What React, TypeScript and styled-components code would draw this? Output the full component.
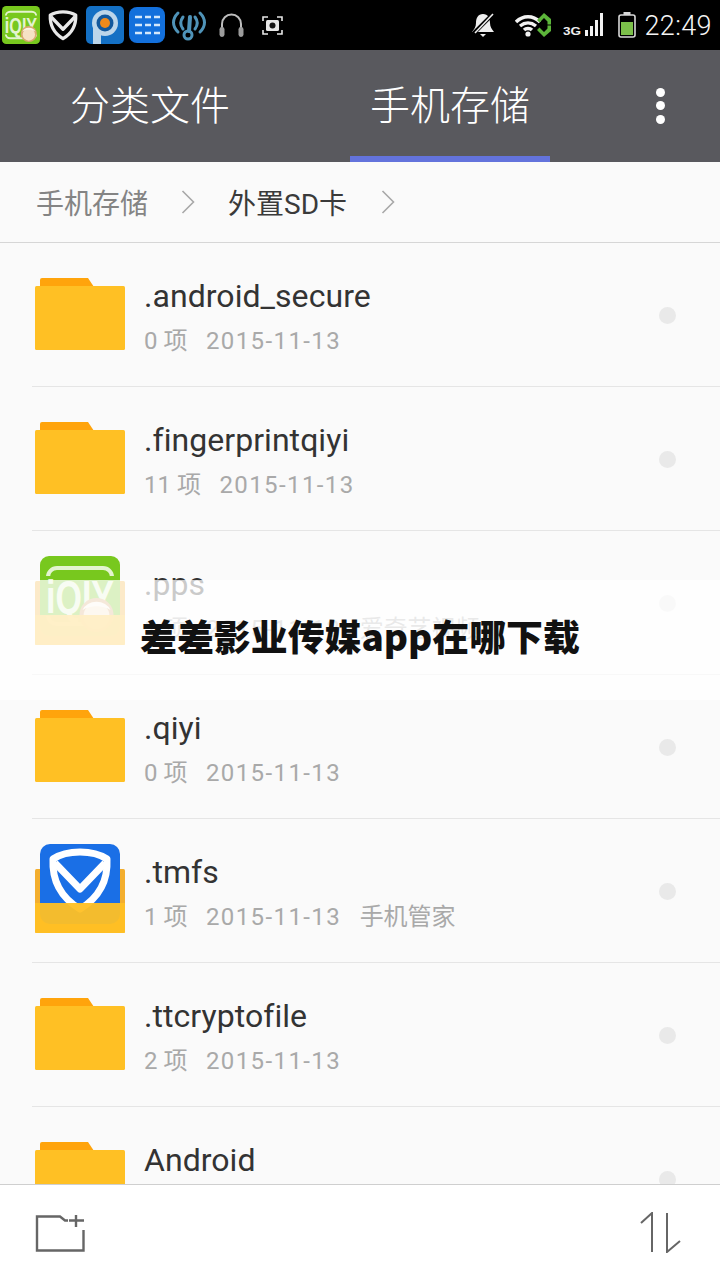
import React from "react";
import styled, { createGlobalStyle } from "styled-components";

const FONT = `Roboto, "Noto Sans CJK SC", "Noto Sans", sans-serif`;

const Global = createGlobalStyle`
  html, body { margin: 0; padding: 0; background: #fafafa; }
  * { box-sizing: border-box; }
`;

const Page = styled.div`
  position: relative;
  width: 720px;
  height: 1280px;
  display: flex;
  flex-direction: column;
  overflow: hidden;
  background: #fafafa;
  font-family: ${FONT};
`;

const StatusBar = styled.div`
  height: 50px;
  flex: none;
  background: #000;
  display: flex;
  align-items: center;
  justify-content: space-between;
  padding: 0 8px 0 2px;
`;

const StatusGroup = styled.div`
  display: flex;
  align-items: center;
`;

const Glyph = styled.svg<{ $ml?: number }>`
  display: block;
  flex: none;
  margin-left: ${(p) => p.$ml ?? 0}px;
`;

const Clock = styled.span`
  margin-left: 8px;
  padding-top: 2px;
  color: #f4f4f4;
  font-size: 27px;
  font-weight: 300;
  letter-spacing: 0.4px;
`;

const TabBar = styled.div`
  height: 112px;
  flex: none;
  background: #59595e;
  display: flex;
  padding-left: 50px;
`;

const Tab = styled.div<{ $active?: boolean }>`
  width: 200px;
  height: 112px;
  margin-right: ${(p) => (p.$active ? 0 : 100)}px;
  display: flex;
  align-items: center;
  justify-content: center;
  color: #fff;
  font-size: 40px;
  font-weight: 300;
  border-bottom: 6px solid ${(p) => (p.$active ? "#6373dc" : "transparent")};
`;

const MoreDots = styled.div`
  margin-left: 100px;
  width: 20px;
  height: 112px;
  display: flex;
  flex-direction: column;
  align-items: center;
  gap: 4.5px;
  padding-top: 37.5px;
`;

const Dot = styled.span`
  width: 9px;
  height: 9px;
  border-radius: 50%;
  background: #fff;
`;

const Breadcrumb = styled.div`
  height: 81px;
  flex: none;
  display: flex;
  align-items: center;
  padding: 0 0 0 36px;
  background: #fafafa;
  border-bottom: 1px solid #d6d6d6;
`;

const Crumb = styled.span<{ $current?: boolean }>`
  font-size: 28px;
  color: ${(p) => (p.$current ? "#3a3a3a" : "#848484")};
`;

const Chevron = styled.svg<{ $mx: number; $mr: number }>`
  display: block;
  margin-left: ${(p) => p.$mx}px;
  margin-right: ${(p) => p.$mr}px;
`;

const List = styled.div`
  flex: 1;
  min-height: 0;
  overflow: hidden;
`;

const RowBox = styled.div`
  height: 144px;
  margin-left: 32px;
  display: flex;
  align-items: flex-start;
  border-bottom: 1px solid #e5e5e5;
`;

const FolderSlot = styled.div<{ $app?: boolean }>`
  width: 90px;
  margin-left: 3px;
  margin-right: 19px;
  padding-top: ${(p) => (p.$app ? 25 : 35)}px;
  flex: none;
`;

const RowText = styled.div`
  padding-top: 31px;
`;

const Name = styled.div`
  font-size: 32px;
  line-height: 44px;
  letter-spacing: 0.05px;
  color: #333;
`;

const Meta = styled.div`
  margin-top: 7px;
  display: flex;
  gap: 18.5px;
  font-size: 24px;
  line-height: 32px;
  color: #a9a9a9;
  white-space: nowrap;
`;

const MetaDate = styled.span`
  letter-spacing: 1.4px;
`;

const RowDot = styled.span`
  margin-left: auto;
  margin-right: 44px;
  margin-top: 64px;
  width: 17px;
  height: 17px;
  border-radius: 50%;
  background: #e9e9e9;
`;

const BottomBar = styled.div`
  height: 96px;
  flex: none;
  background: #fff;
  border-top: 1px solid #cfcfcf;
  display: flex;
  justify-content: space-between;
  padding: 29px 38px 0 35px;
`;

const AddFolderIcon = styled.svg`
  display: block;
`;

const SortIcon = styled.svg`
  display: block;
  margin-top: -2px;
`;

const FolderArt = styled.svg`
  display: block;
`;

const Band = styled.div`
  position: absolute;
  left: 0;
  right: 0;
  top: 580px;
  height: 120px;
  background: rgba(255, 255, 255, 0.74);
  display: flex;
  align-items: center;
  justify-content: center;
`;

const BandTitle = styled.h1`
  margin: 0;
  font-family: "Noto Sans CJK SC", sans-serif;
  font-size: 36.9px;
  font-weight: 900;
  line-height: 1;
  color: #111;
  padding-bottom: 10px;
`;

const IqiyiArt = () => (
  <>
    <rect x="0" y="0" width="80" height="80" rx="9" fill="#78c81e" />
    <rect x="8" y="12" width="64" height="56" rx="9" fill="none" stroke="#e4f4d0" strokeWidth="4" />
    <rect x="4" y="20" width="72" height="40" fill="#78c81e" />
    <text x="40" y="57" textAnchor="middle" fontFamily="Liberation Sans" fontWeight="700" fontSize="46" fill="#e4f4d0" textLength="68" lengthAdjust="spacingAndGlyphs">iQIY</text>
    <circle cx="56.5" cy="59" r="17" fill="#d9a870" />
    <circle cx="56.5" cy="60" r="13" fill="#f6e2c4" />
    <path d="M42.5 54a15 13 0 0 1 28 0c-8-5-20-5-28 0z" fill="#fbf4e6" />
  </>
);

const ShieldArt = ({ stroke = "#fff", w = 9 }: { stroke?: string; w?: number }) => (
  <g fill="none" stroke={stroke} strokeWidth={w} strokeLinejoin="round">
    <path d="M40 8c11 0 21 3 27 7 1 20-7 38-27 50C20 53 12 35 13 15c6-4 16-7 27-7z" />
    <path d="M15 19l25 26 25-26" />
  </g>
);

const Folder = ({ app }: { app?: "iqiyi" | "tencent" }) =>
  app ? (
    <FolderArt width="90" height="90" viewBox="0 0 90 90">
      <rect x="0" y="25" width="90" height="64" rx="1.5" fill="#f3ae2e" />
      <g transform="translate(5 0)">
        {app === "iqiyi" ? (
          <IqiyiArt />
        ) : (
          <>
            <rect width="80" height="80" rx="10" fill="#1a6fe6" />
            <ShieldArt w={7} />
          </>
        )}
      </g>
      <path d="M0 59h90v28.5a1.5 1.5 0 0 1-1.5 1.5H1.5A1.5 1.5 0 0 1 0 87.5z" fill="#ffc024" fillOpacity="0.95" />
    </FolderArt>
  ) : (
    <FolderArt width="90" height="72" viewBox="0 0 90 72">
      <path d="M5 2a2 2 0 0 1 2-2h46l6 9H5z" fill="#ffa40c" />
      <rect x="0" y="8" width="90" height="64" rx="1.5" fill="#ffc024" />
    </FolderArt>
  );

type Item = { name: string; count: string; date: string; extra?: string; app?: "iqiyi" | "tencent" };

const items: Item[] = [
  { name: ".android_secure", count: "0 项", date: "2015-11-13" },
  { name: ".fingerprintqiyi", count: "11 项", date: "2015-11-13" },
  { name: ".pps", count: "1 项", date: "2015-11-13", extra: "爱奇艺视频", app: "iqiyi" },
  { name: ".qiyi", count: "0 项", date: "2015-11-13" },
  { name: ".tmfs", count: "1 项", date: "2015-11-13", extra: "手机管家", app: "tencent" },
  { name: ".ttcryptofile", count: "2 项", date: "2015-11-13" },
  { name: "Android", count: "3 项", date: "2015-11-13" },
];

const Row = ({ item }: { item: Item }) => (
  <RowBox>
    <FolderSlot $app={!!item.app}>
      <Folder app={item.app} />
    </FolderSlot>
    <RowText>
      <Name>{item.name}</Name>
      <Meta>
        <span>{item.count}</span>
        <MetaDate>{item.date}</MetaDate>
        {item.extra && <span>{item.extra}</span>}
      </Meta>
    </RowText>
    <RowDot />
  </RowBox>
);

const ChevronIcon = ({ mx, mr }: { mx: number; mr: number }) => (
  <Chevron $mx={mx} $mr={mr} width="14" height="24" viewBox="0 0 14 24">
    <path d="M1.5 1l11 11-11 11" fill="none" stroke="#a8a8a8" strokeWidth="1.6" />
  </Chevron>
);

const StatusLeft = () => (
  <StatusGroup>
    <Glyph width="38" height="38" viewBox="0 0 80 80">
      <IqiyiArt />
    </Glyph>
    <Glyph $ml={7} width="32" height="32" viewBox="6 2 68 68">
      <ShieldArt stroke="#e8e8e8" w={7} />
    </Glyph>
    <Glyph $ml={7} width="38" height="38" viewBox="0 0 38 38">
      <rect width="38" height="38" rx="5" fill="#1470c4" />
      <circle cx="19" cy="17" r="13" fill="#bcd6ea" />
      <rect x="7" y="18" width="8" height="20" fill="#bcd6ea" />
      <circle cx="19" cy="17" r="8.5" fill="#12589c" />
      <circle cx="19" cy="17" r="5" fill="#ee8a1c" />
    </Glyph>
    <Glyph $ml={5} width="36" height="36" viewBox="0 0 36 36">
      <rect width="36" height="36" rx="8" fill="#1370dc" />
      <path d="M6 10h7m3 0h6m3 0h6M6 18h7m3 0h6m3 0h6M6 26h7m3 0h6m3 0h6" stroke="#d5e8fb" strokeWidth="2.4" />
    </Glyph>
    <Glyph $ml={7} width="34" height="32" viewBox="0 0 34 32">
      <g fill="none" stroke="#4f93b8" strokeWidth="3" strokeLinecap="round">
        <path d="M6 4C0 10 0 17 6 23M28 4c6 6 6 13 0 19" />
        <path d="M11 8c-3 4-3 8 0 12M23 8c3 4 3 8 0 12" />
        <path d="M18 8l-1 14" strokeWidth="4" />
      </g>
      <circle cx="16" cy="26" r="4" fill="none" stroke="#4f93b8" strokeWidth="3" />
    </Glyph>
    <Glyph $ml={13} width="25" height="26" viewBox="0 0 25 26">
      <path d="M3 17v-5a9.5 9.5 0 0 1 19 0v5" fill="none" stroke="#bdbdbd" strokeWidth="2" />
      <rect x="0.5" y="15" width="5" height="10" rx="2.4" fill="#9c9c9c" />
      <rect x="19.5" y="15" width="5" height="10" rx="2.4" fill="#9c9c9c" />
    </Glyph>
    <Glyph $ml={18} width="21" height="19" viewBox="0 0 21 19">
      <path d="M1 5V1h5M15 1h5v4M20 14v4h-5M6 18H1v-4" fill="none" stroke="#e6e6e6" strokeWidth="1.6" />
      <rect x="4" y="4" width="13" height="11" rx="1.5" fill="#e6e6e6" />
      <circle cx="10.5" cy="9.5" r="3" fill="#111" />
    </Glyph>
  </StatusGroup>
);

const StatusRight = () => (
  <StatusGroup>
    <Glyph width="24" height="26" viewBox="0 0 24 26">
      <path d="M12 2c5 0 7 4 7 9 0 4 2 6 4 9H1c2-3 4-5 4-9 0-5 2-9 7-9z" fill="#eee" />
      <path d="M9 22h6l-3 3z" fill="#eee" />
      <path d="M23 1L2 22" stroke="#000" strokeWidth="4" />
      <path d="M22 2L4 21" stroke="#eee" strokeWidth="1.6" />
    </Glyph>
    <Glyph $ml={20} width="36" height="26" viewBox="0 0 36 26">
      <g fill="none" stroke="#f2f2f2" strokeWidth="3.4">
        <path d="M1 10c7-7 17-7 24 0" />
        <path d="M5 14c5-4 11-4 16 0" />
        <path d="M9 18c2-2 6-2 8 0" />
      </g>
      <circle cx="13" cy="22" r="2.6" fill="#f2f2f2" />
      <path d="M29 1l-7 7 2.5 2.5 4.5-4.5 3.5 3.5v3H36V7zM29 25l-7-7 2.5-2.5 4.5 4.5 3.5-3.5v-3H36V19z" fill="#5cb53a" />
    </Glyph>
    <Glyph $ml={12} width="42" height="26" viewBox="0 0 42 26">
      <text x="0" y="23" fontFamily="Liberation Sans" fontSize="11" fontWeight="700" fill="#eee" textLength="18" lengthAdjust="spacingAndGlyphs">3G</text>
      <path d="M22 18h3v6h-3zM27 14h3v10h-3zM32 8h3v16h-3zM37 1h3v23h-3z" fill="#f2f2f2" />
    </Glyph>
    <Glyph $ml={13} width="18" height="26" viewBox="0 0 18 26">
      <rect x="5.5" y="0" width="7" height="3" fill="#d8d8d8" />
      <rect x="1" y="3" width="16" height="22" rx="2" fill="none" stroke="#d8d8d8" strokeWidth="1.6" />
      <rect x="3" y="10" width="12" height="13" fill="#7cc04a" />
    </Glyph>
    <Clock>22:49</Clock>
  </StatusGroup>
);

export default function App() {
  return (
    <Page>
      <Global />
      <StatusBar>
        <StatusLeft />
        <StatusRight />
      </StatusBar>
      <TabBar>
        <Tab>分类文件</Tab>
        <Tab $active>手机存储</Tab>
        <MoreDots>
          <Dot />
          <Dot />
          <Dot />
        </MoreDots>
      </TabBar>
      <Breadcrumb>
        <Crumb>手机存储</Crumb>
        <ChevronIcon mx={33} mr={33} />
        <Crumb $current>外置SD卡</Crumb>
        <ChevronIcon mx={34} mr={0} />
      </Breadcrumb>
      <List>
        {items.map((item) => (
          <Row key={item.name} item={item} />
        ))}
      </List>
      <BottomBar>
        <AddFolderIcon width="50" height="38" viewBox="0 0 50 38">
          <path d="M48.5 16v20.5H2V2.5h23l5 4h3" fill="none" stroke="#666" strokeWidth="2.4" />
          <path d="M34 6.5h15M41 1v12" fill="none" stroke="#666" strokeWidth="2.4" />
        </AddFolderIcon>
        <SortIcon width="42" height="41" viewBox="0 0 42 41">
          <path d="M1 11L12 1v39" fill="none" stroke="#666" strokeWidth="2" />
          <path d="M40 29L27 40V1" fill="none" stroke="#666" strokeWidth="2" />
        </SortIcon>
      </BottomBar>
      <Band>
        <BandTitle>差差影业传媒app在哪下载</BandTitle>
      </Band>
    </Page>
  );
}
